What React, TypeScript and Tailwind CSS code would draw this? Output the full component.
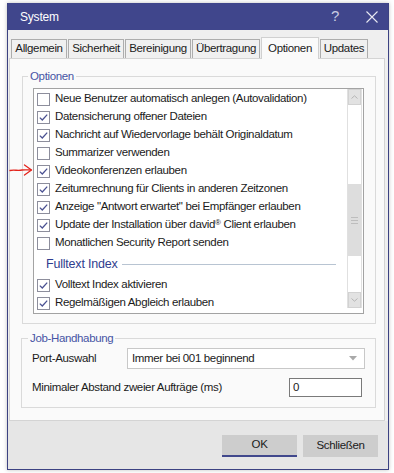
import React from "react";

const Check = ({ on }: { on: boolean }) => (
  <div className="w-[13px] h-[13px] shrink-0 border border-[#8d8e9c] bg-white flex items-center justify-center">
    {on && (
      <svg width="11" height="11" viewBox="0 0 11 11">
        <polyline points="1.8,5.6 4.3,8 9.2,2.6" fill="none" stroke="#4b5292" strokeWidth="1.3" />
      </svg>
    )}
  </div>
);

const Row = ({ on, children }: { on: boolean; children: React.ReactNode }) => (
  <div className="h-[18px] flex items-center gap-[5px] pl-[3px] whitespace-nowrap">
    <Check on={on} />
    <span>{children}</span>
  </div>
);

const tabs = [
  { t: "Allgemein", w: "w-[56px]" },
  { t: "Sicherheit", w: "w-[56px]" },
  { t: "Bereinigung", w: "w-[66px]" },
  { t: "Übertragung", w: "w-[68px]" },
  { t: "Optionen", w: "w-[58px]", sel: true },
  { t: "Updates", w: "w-[48px]" },
];

export default function App() {
  return (
    <div className="w-[394px] h-[473px] bg-white relative overflow-hidden font-['Liberation_Sans',Arial,sans-serif] text-[11.5px] tracking-[-0.35px] text-[#1b1b1b]">
      <div className="pt-[3px] pl-[7px]">
        <div className="w-[382px] h-[467px] flex flex-col border-x border-b border-[#3c4282] shadow-[0_0_4px_rgba(0,0,0,0.25)]">
          {/* title bar */}
          <div className="h-[27px] bg-[#40468c] flex items-center text-white shrink-0">
            <span className="pl-[12px] text-[12px] tracking-[-0.2px] flex-1">System</span>
            <span className="text-[15px] text-[#c9cce2] mr-[27px] font-light">?</span>
            <svg width="12" height="12" viewBox="0 0 12 12" className="mr-[10px]">
              <path d="M0.5 0.5 L11.5 11.5 M11.5 0.5 L0.5 11.5" stroke="#e8e9f2" strokeWidth="1.1" />
            </svg>
          </div>
          {/* body */}
          <div className="flex-1 flex flex-col bg-[#efefef]">
            {/* tabs */}
            <div className="h-[28px] flex items-end pl-[3px] shrink-0 relative z-10">
              {tabs.map((tb) =>
                tb.sel ? (
                  <div
                    key={tb.t}
                    className={`${tb.w} h-[22px] mb-[-1px] mr-[1px] bg-[#fafafa] border-x border-t border-[#d0d0d0] flex items-center justify-center`}
                  >
                    {tb.t}
                  </div>
                ) : (
                  <div
                    key={tb.t}
                    className={`${tb.w} h-[19px] mr-[1px] bg-[#f0f0f0] border-x border-t border-[#adadad] flex items-center justify-center`}
                  >
                    {tb.t}
                  </div>
                )
              )}
            </div>
            {/* panel */}
            <div className="flex-1 ml-[1px] mr-[3px] bg-[#fafafa] border border-[#d4d4d4] flex flex-col">
              <fieldset className="mt-[10px] ml-[12px] mr-[8px] border border-[#dadada] pl-[10px] pr-[11px] pb-[9px]">
                <legend className="ml-[-5px] px-[2px] h-[14px] leading-[14px] text-[#4654a4]">Optionen</legend>
                <div className="mt-[5px] h-[226px] border border-[#a3a3a3] bg-white flex">
                  <div className="flex-1 flex flex-col pt-[1px]">
                    <Row on={false}>Neue Benutzer automatisch anlegen (Autovalidation)</Row>
                    <Row on={true}>Datensicherung offener Dateien</Row>
                    <Row on={true}>Nachricht auf Wiedervorlage behält Originaldatum</Row>
                    <Row on={false}>Summarizer verwenden</Row>
                    <Row on={true}>Videokonferenzen erlauben</Row>
                    <Row on={true}>Zeitumrechnung für Clients in anderen Zeitzonen</Row>
                    <Row on={true}>Anzeige "Antwort erwartet" bei Empfänger erlauben</Row>
                    <Row on={true}>
                      Update der Installation über david
                      <span className="text-[8px] relative top-[-3px]">®</span> Client erlauben
                    </Row>
                    <Row on={false}>Monatlichen Security Report senden</Row>
                    <div className="h-[24px] flex items-center pl-[12px] mr-[11px] gap-[4px]">
                      <span className="text-[12.5px] text-[#2f3d8e] tracking-[-0.2px]">Fulltext Index</span>
                      <div className="flex-1 h-px bg-[#b8c4d2]" />
                    </div>
                    <Row on={true}>Volltext Index aktivieren</Row>
                    <Row on={true}>Regelmäßigen Abgleich erlauben</Row>
                  </div>
                  {/* scrollbar */}
                  <div className="w-[15px] mr-[1px] mb-[5px] flex flex-col border-x border-[#e0e0e0]">
                    <div className="h-[16px] bg-[#e2e2e2] border border-[#d2d2d2] flex items-center justify-center">
                      <svg width="7" height="4" viewBox="0 0 7 4">
                        <path d="M0.5 3.5 L3.5 0.8 L6.5 3.5" fill="none" stroke="#b5b5b5" strokeWidth="1" />
                      </svg>
                    </div>
                    <div className="h-[79px]" />
                    <div className="h-[72px] bg-[#dddddd] flex flex-col items-center justify-center gap-[2px]">
                      <div className="w-[7px] h-px bg-[#bdbdbd]" />
                      <div className="w-[7px] h-px bg-[#bdbdbd]" />
                      <div className="w-[7px] h-px bg-[#bdbdbd]" />
                    </div>
                    <div className="flex-1" />
                    <div className="h-[16px] bg-[#e2e2e2] border border-[#d2d2d2] flex items-center justify-center">
                      <svg width="7" height="4" viewBox="0 0 7 4">
                        <path d="M0.5 0.5 L3.5 3.2 L6.5 0.5" fill="none" stroke="#b5b5b5" strokeWidth="1" />
                      </svg>
                    </div>
                  </div>
                </div>
              </fieldset>

              <fieldset className="mt-[7px] ml-[11px] mr-[8px] border border-[#dadada] pl-[10px] pr-[10px] pb-[10px]">
                <legend className="ml-[-4px] px-[2px] h-[14px] leading-[14px] text-[#4654a4]">Job-Handhabung</legend>
                <div className="mt-[3px] flex items-center">
                  <span className="w-[95px] shrink-0">Port-Auswahl</span>
                  <div className="flex-1 h-[21px] bg-white border border-[#c8c8c8] flex items-center pl-[4px] pr-[7px]">
                    <span className="flex-1">Immer bei 001 beginnend</span>
                    <svg width="8" height="5" viewBox="0 0 8 5">
                      <path d="M0 0 L8 0 L4 4.5 Z" fill="#a9a9a9" />
                    </svg>
                  </div>
                </div>
                <div className="mt-[9px] flex items-center">
                  <span className="flex-1">Minimaler Abstand zweier Aufträge (ms)</span>
                  <div className="w-[73px] h-[19px] bg-white border border-[#7a7a7a] flex items-center pl-[3px] mr-[3px]">
                    0
                  </div>
                </div>
              </fieldset>
            </div>
            {/* bottom bar */}
            <div className="h-[48px] shrink-0 bg-[#e6e6e6] flex items-start justify-end pt-[14px] pr-[10px] gap-[6px]">
              <div className="w-[75px] h-[22px] bg-[#cdcdcd] border-b-2 border-[#41488c] flex items-center justify-center">
                OK
              </div>
              <div className="w-[75px] h-[22px] bg-[#cdcdcd] flex items-center justify-center">Schließen</div>
            </div>
          </div>
        </div>
      </div>
      {/* red annotation arrow */}
      <svg className="absolute left-[9px] top-[163px]" width="24" height="14" viewBox="0 0 24 14">
        <path d="M1 7.5 C5 6.5 9 8 13 7 C16 6.6 19 7 22 7" fill="none" stroke="#e3241c" strokeWidth="1.3" strokeLinecap="round" />
        <path d="M15.5 2 L22.5 7 L15.5 12" fill="none" stroke="#e3241c" strokeWidth="1.3" strokeLinecap="round" strokeLinejoin="round" />
      </svg>
    </div>
  );
}
